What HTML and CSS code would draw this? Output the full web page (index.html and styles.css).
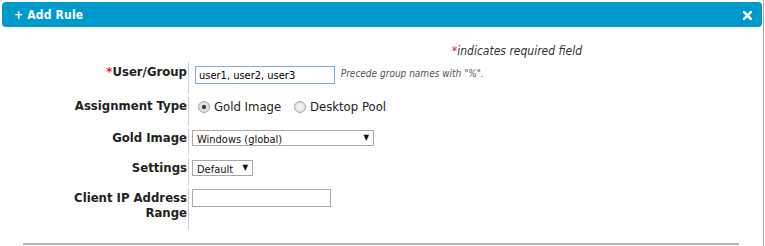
FILE: index.html
```html
<!DOCTYPE html>
<html>
<head>
    <link rel="stylesheet" href="styles.css">
</head>
<body>
    <div class="dialog">
        <div class="titlebar">
            <span class="title">+ Add Rule</span>
            <span class="close">
                <svg width="9" height="9" viewBox="0 0 9 9">
                    <path d="M1.2 1.2 L7.8 7.8 M7.8 1.2 L1.2 7.8" stroke="#fff" stroke-width="2.6" stroke-linecap="square"/>
                </svg>
            </span>
        </div>
        <div class="content">
            <div class="required-note"><span class="req">*</span>indicates required field</div>
            <table class="form-table">
                <colgroup>
                    <col class="label-col">
                    <col>
                </colgroup>
                <tr>
                    <td class="label-cell"><span class="req">*</span>User/Group</td>
                    <td class="value-cell">
                        <input type="text" class="text-input focused" value="user1, user2, user3">
                        <span class="hint">Precede group names with "%".</span>
                    </td>
                </tr>
                <tr>
                    <td class="label-cell">Assignment Type</td>
                    <td class="value-cell">
                        <label class="radio-option"><input type="radio" name="assign" checked> Gold Image</label>
                        <label class="radio-option"><input type="radio" name="assign"> Desktop Pool</label>
                    </td>
                </tr>
                <tr>
                    <td class="label-cell">Gold Image</td>
                    <td class="value-cell">
                        <span class="select-wrap wide">
                            <select><option>Windows (global)</option></select>
                        </span>
                    </td>
                </tr>
                <tr>
                    <td class="label-cell">Settings</td>
                    <td class="value-cell">
                        <span class="select-wrap">
                            <select><option>Default</option></select>
                        </span>
                    </td>
                </tr>
                <tr>
                    <td class="label-cell">Client IP Address Range</td>
                    <td class="value-cell">
                        <input type="text" class="text-input plain">
                    </td>
                </tr>
            </table>
            <div class="footer-line"></div>
        </div>
    </div>
</body>
</html>
```

FILE: styles.css
```css
body {
    margin: 0;
    padding: 0;
    background-color: #fff;
    font-family: "DejaVu Sans Condensed", "DejaVu Sans", sans-serif;
    color: #222;
}
.dialog {
    width: 764px;
    height: 246px;
    box-sizing: border-box;
    padding: 2px 1px 0 2px;
    border-right: 1px solid #a8a8a8;
    overflow: hidden;
}
.titlebar {
    height: 25px;
    background-color: #0099cb;
    border-radius: 4px;
    display: flex;
    align-items: center;
    justify-content: space-between;
    padding: 0 10px 0 12px;
}
.title {
    color: #fff;
    font-weight: bold;
    font-size: 12px;
    letter-spacing: 0.2px;
}
.close {
    display: flex;
    margin-top: 1px;
}
.content {
    padding-top: 17px;
}
.required-note {
    width: 580px;
    text-align: right;
    font-style: italic;
    font-size: 12px;
    line-height: 15px;
    color: #333;
}
.req {
    color: #e8212b;
}
.form-table {
    border-collapse: separate;
    border-spacing: 0 3px;
    table-layout: fixed;
    width: 500px;
    margin-left: 68px;
}
.label-col {
    width: 119px;
}
.label-cell {
    text-align: right;
    vertical-align: top;
    font-weight: bold;
    font-size: 13px;
    line-height: 15px;
    padding: 2px 1px 10px 0;
    border-right: 1px solid #cfcfcf;
    color: #222;
}
.value-cell {
    vertical-align: top;
    padding: 2px 0 9px 3px;
    font-size: 13px;
}
.text-input {
    box-sizing: border-box;
    height: 18px;
    border: 1px solid #a9a9a9;
    padding: 0 3px;
    font-family: inherit;
    font-size: 11px;
    vertical-align: top;
    outline: none;
}
.text-input.focused {
    width: 140px;
    margin: 2px 0 0 3px;
    border-color: #7ea9e1;
    color: #000;
}
.text-input.plain {
    width: 139px;
    margin-top: -1px;
}
.hint {
    font-style: italic;
    font-size: 10px;
    color: #555;
    margin-left: 2px;
    vertical-align: top;
    line-height: 18px;
    position: relative;
    top: 1px;
}
.radio-option {
    display: inline-flex;
    align-items: center;
    margin-left: 5px;
    margin-right: 3px;
    line-height: 17px;
}
.radio-option input {
    appearance: none;
    width: 12px;
    height: 12px;
    margin: 0 4px 0 1px;
    border: 1px solid #a5a5a5;
    border-radius: 50%;
    background: radial-gradient(circle, #f7f7f7 0, #dcdcdc 100%);
}
.radio-option input:checked {
    background: radial-gradient(circle, #333 0, #444 1.8px, #e6e6e6 2.6px, #d8d8d8 100%);
}
.select-wrap {
    position: relative;
    display: inline-block;
    border: 1px solid #a9a9a9;
    height: 14px;
    background: #fff;
}
.select-wrap select {
    appearance: none;
    border: none;
    background: transparent;
    font-family: inherit;
    font-size: 11px;
    height: 14px;
    line-height: 14px;
    padding: 0 12px 0 4px;
    color: #111;
    width: 59px;
    outline: none;
}
.select-wrap.wide select {
    width: 180px;
}
.select-wrap::after {
    content: "\25BC";
    position: absolute;
    right: 4px;
    top: 0;
    font-size: 8px;
    line-height: 14px;
    color: #111;
    pointer-events: none;
}
.footer-line {
    margin: 10px 23px 0 21px;
    border-top: 2px solid #b4b4b4;
}
```
